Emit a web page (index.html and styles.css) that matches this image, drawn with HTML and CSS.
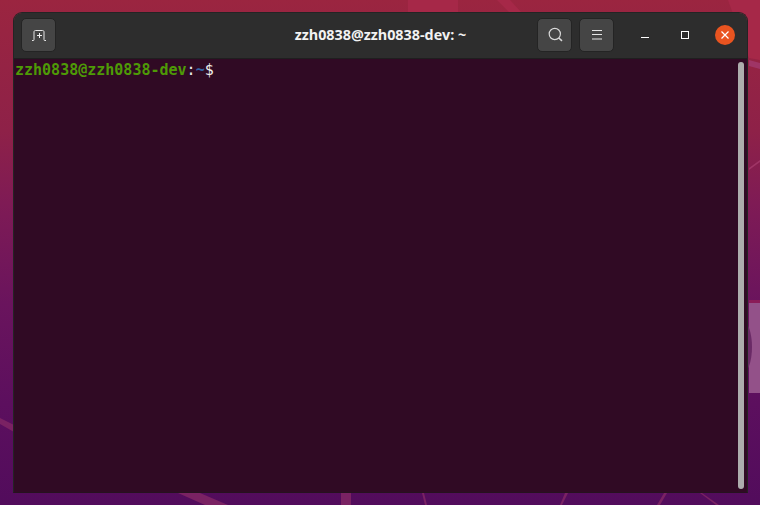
FILE: index.html
```html
<!DOCTYPE html>
<html lang="en">
<head>
<meta charset="utf-8">
<title>zzh0838@zzh0838-dev: ~</title>
<link rel="stylesheet" href="styles.css">
</head>
<body>
<div class="desktop">
  <svg class="wallpaper" viewBox="0 0 760 505" width="760" height="505" aria-hidden="true">
    <rect class="glow" x="408" y="0" width="50" height="12"/>
    <path class="glow" d="M497 0H510L521 12H509Z"/>
    <path class="glow" d="M728 0H760V60L749 58Z"/>
    <path class="band" d="M749 60L760 63V69L749 66Z"/>
    <path class="band" d="M749 168L760 160V162L749 170Z"/>
    <path class="streak" d="M0 418L14 425L14 432L0 424Z"/>
    <path class="streak" d="M178 493L205 505L228 505L200 493Z"/>
    <path class="streak" d="M341 493V505H351V493Z"/>
    <path class="streak" d="M422 493L425 505L427 505L424 493Z"/>
    <path class="streak" d="M565 493L560 505L562 505L568 493Z"/>
    <path class="streak" d="M664 493L657 505L660 505L667 493Z"/>
    <path class="streak" d="M700 493L716 505L719 505L702 493Z"/>
    <rect class="edge" x="749" y="300" width="11" height="3"/>
    <rect class="panel" x="749" y="303" width="11" height="90"/>
    <ellipse class="shade" cx="742" cy="347" rx="10" ry="27"/>
  </svg>
  <main class="window">
    <header class="titlebar">
      <div class="bar-side">
        <button class="tool tool-first" type="button" aria-label="New tab">
          <svg viewBox="0 0 16 16" width="16" height="16" class="icon"><path d="M1 13.5H2.5C3 13.5 3 13 3 12.5V5C3 4 3.5 3.5 4.5 3.5H11.5C12.5 3.5 13 4 13 5V12.5C13 13 13 13.5 13.5 13.5H15" fill="none" stroke="#e6e6e6"/><path d="M8.5 6V11M6 8.5H11" stroke="#f2f2f2" fill="none"/></svg>
        </button>
      </div>
      <h1 class="title">zzh0838@zzh0838-dev: ~</h1>
      <div class="bar-side bar-right">
        <button class="tool" type="button" aria-label="Search">
          <svg viewBox="0 0 16 16" width="16" height="16" class="icon"><circle cx="7.8" cy="7" r="5.6" fill="none" stroke="#d8d8d8" stroke-width="1.2"/><path d="M11.8 11L15 13.8" stroke="#d8d8d8" stroke-width="1.6"/></svg>
        </button>
        <button class="tool" type="button" aria-label="Menu">
          <svg viewBox="0 0 16 16" width="16" height="16" class="icon"><path d="M3 3.5H13M3 7.5H13M3 12H13" stroke="#e6e6e6" fill="none"/></svg>
        </button>
        <div class="controls">
          <svg viewBox="0 0 20 20" width="20" height="20" class="icon"><path d="M6 12.5H14" stroke="#fff" fill="none"/></svg>
          <svg viewBox="0 0 20 20" width="20" height="20" class="icon"><rect x="6.5" y="6.5" width="7" height="7" stroke="#fff" fill="none"/></svg>
          <span class="close">
            <svg viewBox="0 0 20 20" width="20" height="20" class="icon"><path d="M6.5 6.5L13.5 13.5M13.5 6.5L6.5 13.5" stroke="#fff" stroke-width="1.2" fill="none"/></svg>
          </span>
        </div>
      </div>
    </header>
    <section class="terminal">
      <pre class="prompt"><span class="user">zzh0838@zzh0838-dev</span><span class="colon">:</span><span class="path">~</span><span class="colon">$</span></pre>
      <div class="scrollbar"></div>
    </section>
  </main>
</div>
</body>
</html>
```
FILE: styles.css
```css
* { box-sizing: border-box; }
html, body { margin: 0; padding: 0; }
body { width: 760px; height: 505px; overflow: hidden; }
.desktop {
  position: relative;
  width: 760px;
  height: 505px;
  padding: 12px 12px 12px 13px;
  background: linear-gradient(180deg, #9b2540 0%, #8e2148 26%, #7f1b55 40%, #6a145d 60%, #5c0f5e 80%, #520c5c 100%);
}
.wallpaper { position: absolute; left: 0; top: 0; }
.glow { fill: #a62848; }
.band { fill: #9f3566; }
.streak { fill: #7a2263; }
.edge { fill: #8a1c58; }
.panel { fill: #935189; }
.shade { fill: #6a2a66; }
.window {
  position: relative;
  width: 735px;
  height: 481px;
  display: flex;
  flex-direction: column;
  border: 1px solid #242424;
  border-bottom-color: #26121f;
  border-radius: 9px 9px 0 0;
  overflow: hidden;
}
.titlebar {
  flex: none;
  height: 46px;
  display: flex;
  align-items: center;
  justify-content: space-between;
  padding: 0 12px 1px;
  background: #2d2d2d;
  border-bottom: 1px solid #1f1f1f;
}
.bar-side { flex: 1 1 0; display: flex; align-items: center; gap: 7px; }
.bar-right { justify-content: flex-end; }
.title {
  margin: 0;
  font: 700 14.33px/20px "Open Sans", "Noto Sans", sans-serif;
  color: #f2f2f2;
  white-space: nowrap;
}
.tool {
  flex: none;
  width: 35px;
  height: 34px;
  padding: 0;
  display: flex;
  align-items: center;
  justify-content: center;
  background: #454545;
  border: 1px solid #242424;
  border-radius: 5px;
}
.tool-first { margin-left: -5px; }
.icon { display: block; }
.controls { display: flex; align-items: center; gap: 20px; margin-left: 14px; }
.close {
  width: 20px;
  height: 20px;
  border-radius: 50%;
  background: #e95420;
  display: block;
}
.terminal {
  position: relative;
  flex: 1;
  min-height: 0;
  background: #300a24;
  padding: 2px 1px;
}
.prompt {
  margin: 0;
  font: 700 15px/18px "DejaVu Sans Mono", monospace;
  color: #eeeeec;
}
.user { color: #4e9a06; }
.path { color: #3465a4; }
.colon { color: #eeeeec; font-weight: 400; }
.scrollbar {
  position: absolute;
  top: 3px;
  right: 3px;
  bottom: 3px;
  width: 6px;
  border-radius: 3px;
  background: #adadad;
}
```
